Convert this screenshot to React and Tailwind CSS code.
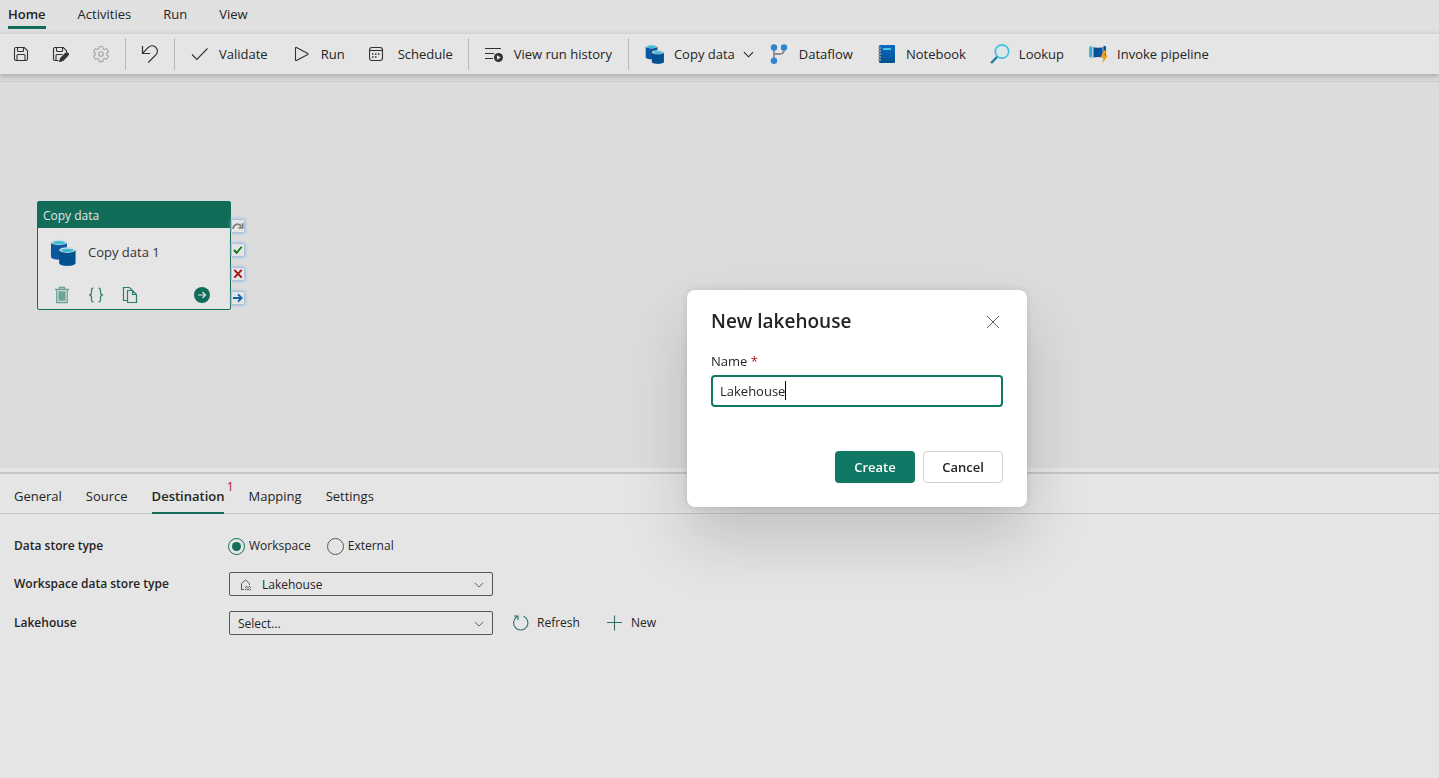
import React, { useState } from 'react';

const SaveIcon = () => (
  <svg width="16" height="16" viewBox="0 0 16 16" fill="none" stroke="#333" strokeWidth="1.1">
    <path d="M1.500 3A1.500 1.500 0 0 1 3 1.500h8.300l3.200 3.200V13a1.500 1.500 0 0 1-1.500 1.500H3A1.500 1.500 0 0 1 1.500 13z" />
    <path d="M4.500 1.500v3a1 1 0 0 0 1 1h4a1 1 0 0 0 1-1v-3M4 14.500V9.500a1 1 0 0 1 1-1h6a1 1 0 0 1 1 1v5" />
  </svg>
);

const SaveEditIcon = () => (
  <svg width="17" height="16" viewBox="0 0 17 16" fill="none" stroke="#333" strokeWidth="1.1">
    <path d="M6.500 14.500H3A1.500 1.500 0 0 1 1.500 13V3A1.500 1.500 0 0 1 3 1.500h8.300l3.200 3.200V6" />
    <path d="M4.500 1.500v3a1 1 0 0 0 1 1h4a1 1 0 0 0 1-1v-3M4 14.500V9.500a1 1 0 0 1 1-1h5.500" />
    <path d="M13.700 7.200a1.500 1.500 0 0 1 2.200 2.200l-5 5-3.200 1.100.9-3.200z" fill="#333" />
  </svg>
);

const GearIcon = () => (
  <svg width="18" height="18" viewBox="0 0 24 24" fill="none" stroke="#a6a6a6" strokeWidth="1.5" strokeLinejoin="round">
    <path d="M9.700 2h4.600l.6 3 1.800 1.050 2.900-1 2.300 4-2.300 2v2l2.300 2-2.300 4-2.900-1-1.800 1.050-.6 3H9.700l-.6-3-1.800-1.050-2.900 1-2.300-4 2.300-2v-2l-2.300-2 2.300-4 2.900 1L9.100 5z" />
    <circle cx="12" cy="12" r="3" />
  </svg>
);

const UndoIcon = () => (
  <svg width="18" height="20" viewBox="0 0 18 20" fill="none" stroke="#333" strokeWidth="1.2">
    <path d="M1.500 2v7.500H9M1.800 9.200l5-5.400c2.200-2.300 5.400-2.500 7.600-.8 2.600 2.100 2.700 5.500.4 7.900L7.300 18.500" />
  </svg>
);

const CheckIcon = () => (
  <svg width="18" height="14" viewBox="0 0 18 14" fill="none" stroke="#333" strokeWidth="1.1">
    <path d="M1 7.500 5.800 12.500 16.500 1.500" />
  </svg>
);

const PlayIcon = () => (
  <svg width="16" height="16" viewBox="0 0 16 16" fill="none" stroke="#333" strokeWidth="1.1" strokeLinejoin="round">
    <path d="M1.500 2v12c0 .5.400.700.900.500l11.400-6c.5-.3.500-.8 0-1L2.400 1.500c-.5-.2-.9 0-.9.500z" />
  </svg>
);

const CalendarIcon = () => (
  <svg width="20" height="16" viewBox="1 0 20 16" fill="none" stroke="#333" strokeWidth="1.1">
    <rect x="1.500" y="1.500" width="13" height="13" rx="2.500" />
    <path d="M1.500 4.500h13" />
    <path d="M7 8h1.500M10 8h1.500M4 8h1.500M4 11h1.500M7 11h1.500" strokeWidth="1.5" />
  </svg>
);

const HistoryIcon = () => (
  <svg width="20" height="18" viewBox="0 0 20 18" fill="none" stroke="#333" strokeWidth="1.2">
    <path d="M0 3.500h16M0 8.500h9M0 13.500h8" />
    <circle cx="13.500" cy="12.500" r="4.500" fill="#333" stroke="none" />
    <path d="M12 10.200v4.600l3.800-2.300z" fill="#e5e5e5" stroke="none" />
  </svg>
);

const CopyDataIcon = ({ size = 20 }) => (
  <svg width={size} height={size} viewBox="0 0 28 28">
    <path d="M1 3.500v15c0 1.800 4 3 8.500 3s8-1.200 8-3v-15z" fill="#0a58a0" />
    <ellipse cx="9.250" cy="3.500" rx="8.250" ry="2.700" fill="#cdd9e0" />
    <ellipse cx="9.250" cy="3.800" rx="6.300" ry="1.700" fill="#35bcd6" />
    <path d="M9.500 11.500V25c0 1.800 3.800 3 8.500 3s8.500-1.200 8.500-3V11.500z" fill="#03508f" />
    <ellipse cx="18" cy="11.500" rx="8.500" ry="2.900" fill="#cdd9e0" />
    <ellipse cx="18" cy="11.800" rx="6.500" ry="1.800" fill="#35bcd6" />
  </svg>
);

const DataflowIcon = () => (
  <svg width="20" height="22" viewBox="1 0 20 22" fill="none">
    <path d="M5 4v14M5 11h5.500c3 0 4.500-1.500 4.500-4V4" stroke="#8b8b8b" strokeWidth="1.8" />
    <circle cx="5" cy="4.500" r="3.200" fill="#2f86d0" />
    <circle cx="15" cy="4.500" r="3.200" fill="#2f86d0" />
    <circle cx="5" cy="17.800" r="3.200" fill="#2f86d0" />
  </svg>
);

const NotebookIcon = () => (
  <svg width="20" height="20" viewBox="1 0 20 20">
    <defs>
      <linearGradient id="notebook" x1="0" y1="0" x2="0" y2="1">
        <stop offset="0" stopColor="#0a6cc4" />
        <stop offset="1" stopColor="#05508f" />
      </linearGradient>
    </defs>
    <rect x="3" y="1" width="16" height="18" rx="1" fill="url(#notebook)" />
    <rect x="7" y="4" width="8" height="2" fill="#46c3e0" />
    <path d="M2 4h3M2 7h3M2 10h3M2 13h3M2 16h3" stroke="#a3a3a3" strokeWidth="1.5" />
  </svg>
);

const LookupIcon = () => (
  <svg width="20" height="22" viewBox="0 0 20 22" fill="none">
    <path d="M7.500 13.500 1.800 19.300" stroke="#1f7fa3" strokeWidth="2.4" strokeLinecap="round" />
    <circle cx="12" cy="8.500" r="6.700" stroke="#3fc2dc" strokeWidth="1.7" fill="#dde7ea" />
  </svg>
);

const InvokeIcon = () => (
  <svg width="20" height="20" viewBox="0 0 20 20">
    <path d="M4 3c4 1 8.500 1 12.500 0v10.500c-4-.8-8.500-.8-12.500 0z" fill="#06529a" />
    <rect x="14.500" y="1.500" width="3.500" height="13" rx="1.700" fill="#a9c7d6" />
    <rect x="15.500" y="2" width="2.500" height="12" rx="1.200" fill="#0a4f8c" />
    <rect x="1" y="1.500" width="4.500" height="13" rx="2.200" fill="#c3d3db" />
    <rect x="1.300" y="2.500" width="2.800" height="11" rx="1.400" fill="#2fb0d0" />
    <path d="M16 6.500 12.200 13.500h3.400l-1.400 6L20 11.500h-3.200l2-5z" fill="#f0a010" />
  </svg>
);

const ChevronIcon = ({ size = 12 }) => (
  <svg width={size} height={size} viewBox="0 0 12 12" fill="none" stroke="currentColor" strokeWidth="1.2">
    <path d="M1 3.500l5 5 5-5" />
  </svg>
);

const TrashIcon = () => (
  <svg width="16" height="18" viewBox="0 0 16 18" fill="none" stroke="#6ca598" strokeWidth="1.3">
    <path d="M1 3.500h14M5.500 3V1.500h5V3M2.700 3.500v13h10.600v-13" />
    <path d="M5 6h6v8H5z" fill="#6ca598" />
  </svg>
);

const BracesIcon = () => (
  <svg width="16" height="16" viewBox="0 0 16 16" fill="none" stroke="#2c7d6c" strokeWidth="1.2">
    <path d="M5.500 1C3.500 1 3.500 2 3.500 3.500v2C3.500 7 3 8 1 8c2 0 2.500 1 2.500 2.500v2c0 1.500 0 2.500 2 2.500M10.500 1c2 0 2 1 2 2.500v2C12.500 7 13 8 15 8c-2 0-2.500 1-2.500 2.500v2c0 1.500 0 2.500-2 2.500" />
  </svg>
);

const PagesIcon = () => (
  <svg width="16" height="18" viewBox="0 0 16 18" fill="none" stroke="#2c7d6c" strokeWidth="1.2">
    <path d="M5 14.500H1.500v-13h6l3 3M5.500 4.500h5l4 4v8h-9zM10.500 4.500v4h4" />
  </svg>
);

const GoIcon = () => (
  <svg width="16" height="16" viewBox="0 0 16 16" fill="none">
    <circle cx="8" cy="8" r="8" fill="#116d59" />
    <path d="M4 8h7.500M8.500 5l3 3-3 3" stroke="#e5e5e5" strokeWidth="1.2" />
  </svg>
);

const LakehouseIcon = () => (
  <svg width="12" height="12" viewBox="0 0 12 12" fill="none" stroke="#555" strokeWidth="1">
    <path d="M4 10.500H1.500V4.500L5.500 1l4 3.500V6M5 8.500l1.500-1 1.500 1 1.500-1 1.500 1M5 11l1.500-1L8 11l1.500-1 1.500 1" />
  </svg>
);

const RefreshIcon = () => (
  <svg width="18" height="18" viewBox="0 0 18 18" fill="none" stroke="#2f6f68" strokeWidth="1.1">
    <path d="M11.500 2.200a7.200 7.200 0 1 1-6.300.4M2 2h4v4" />
  </svg>
);

const PlusIcon = () => (
  <svg width="16" height="16" viewBox="0 0 16 16" fill="none" stroke="#2f6f68" strokeWidth="1.1">
    <path d="M7.500 .500v15M0 7.500h15" />
  </svg>
);

const CloseIcon = () => (
  <svg width="14" height="14" viewBox="0 0 14 14" fill="none" stroke="#616161" strokeWidth="1">
    <path d="M1 1l12 12M13 1 1 13" />
  </svg>
);

const ports = [
  { label: 'On skip', path: 'M1 9.500c1-5.500 6.500-6.500 9-2.500M11.500 3.500v5H7', color: '#808080' },
  { label: 'On success', path: 'M2 6.500 5 9.500 10.500 3', color: '#0f7a12' },
  { label: 'On fail', path: 'M2.500 2l8 8.500M10.500 2l-8 8.500', color: '#a80f0f' },
  { label: 'On completion', path: 'M1 6.500h9.500M6.500 2.500l4 4-4 4', color: '#1460b0' },
];

const ToolButton = ({ icon, children }) => (
  <button type="button" className="flex h-8 items-center gap-[9px] px-3 whitespace-nowrap">
    <span className="flex w-5 shrink-0 justify-center">{icon}</span>
    {children}
  </button>
);

const Separator = () => <div className="h-8 w-px shrink-0 bg-[#b8b8b8]" />;

const TopTabs = () => (
  <nav className="flex h-[33px] gap-8 bg-[#e0e0e0] px-2">
    {['Home', 'Activities', 'Run', 'View'].map((tab) => (
      <a
        key={tab}
        href="#"
        className={
          tab === 'Home'
            ? 'h-[29px] border-b-3 border-[#116d59] pt-1 font-semibold'
            : 'h-[29px] pt-1'
        }
      >
        {tab}
      </a>
    ))}
  </nav>
);

const Toolbar = () => (
  <div className="relative z-10 flex h-[41px] items-center border-t border-[#d2d2d2] bg-[#e5e5e5] shadow-[0_2px_5px_rgba(0,0,0,0.22)]">
    <div className="flex w-[125px] shrink-0 items-center gap-[23px] pl-[13px]">
      <button type="button" aria-label="Save"><SaveIcon /></button>
      <button type="button" aria-label="Save as"><SaveEditIcon /></button>
      <button type="button" aria-label="Settings" disabled><GearIcon /></button>
    </div>
    <Separator />
    <button type="button" aria-label="Undo" className="flex w-12 shrink-0 justify-center"><UndoIcon /></button>
    <Separator />
    <div className="flex px-[3px]">
      <ToolButton icon={<CheckIcon />}>Validate</ToolButton>
      <ToolButton icon={<PlayIcon />}>Run</ToolButton>
      <ToolButton icon={<CalendarIcon />}>Schedule</ToolButton>
    </div>
    <Separator />
    <div className="flex px-1">
      <ToolButton icon={<HistoryIcon />}>View run history</ToolButton>
    </div>
    <Separator />
    <div className="flex pl-1">
      <button type="button" className="flex h-8 items-center gap-[9px] pr-1 pl-3 whitespace-nowrap">
        <CopyDataIcon />
        <span className="flex items-center gap-2">Copy data <ChevronIcon size={11} /></span>
      </button>
      <ToolButton icon={<DataflowIcon />}>Dataflow</ToolButton>
      <ToolButton icon={<NotebookIcon />}>Notebook</ToolButton>
      <ToolButton icon={<LookupIcon />}>Lookup</ToolButton>
      <ToolButton icon={<InvokeIcon />}>Invoke pipeline</ToolButton>
    </div>
  </div>
);

const ActivityNode = () => (
  <div className="absolute top-[119px] left-[37px] w-[194px]">
    <div className="rounded-xs border border-[#116d59] bg-[#e5e5e5]">
      <div className="h-[26px] bg-[#116d59] pl-[5px] text-xs leading-[27px] text-[#e5e5e5]">Copy data</div>
      <div className="flex h-[49px] items-center gap-[11px] pl-3 text-[#333]">
        <CopyDataIcon size={27} />
        <span className="pb-0.5">Copy data 1</span>
      </div>
      <div className="flex h-8 items-center gap-[18px] pt-1 pl-4">
        <button type="button" aria-label="Delete"><TrashIcon /></button>
        <button type="button" aria-label="Code"><BracesIcon /></button>
        <button type="button" aria-label="Clone"><PagesIcon /></button>
        <button type="button" aria-label="Open" className="mr-5 ml-auto"><GoIcon /></button>
      </div>
    </div>
    <div className="absolute top-[19px] left-[195px] flex flex-col gap-3">
      {ports.map((port) => (
        <button
          key={port.label}
          type="button"
          aria-label={port.label}
          className="flex size-3 items-center justify-center bg-[#e5e5e5] shadow-[0_0_3px_1px_#8db4dc]"
        >
          <svg width="12" height="12" viewBox="0 0 13 13" fill="none" stroke={port.color} strokeWidth="2">
            <path d={port.path} />
          </svg>
        </button>
      ))}
    </div>
  </div>
);

const DetailTabs = () => (
  <nav className="flex h-10 gap-6 border-b border-[#c6c6c6] px-3.5">
    {['General', 'Source', 'Destination', 'Mapping', 'Settings'].map((tab) => (
      <a
        key={tab}
        href="#"
        className={
          tab === 'Destination'
            ? 'relative h-10 border-b-2 border-[#116d59] pt-3 font-semibold'
            : 'h-10 pt-3'
        }
      >
        {tab}
        {tab === 'Destination' && (
          <span className="absolute top-0.5 left-full pl-0.5 font-normal text-[#b5233f]">1</span>
        )}
      </a>
    ))}
  </nav>
);

const radioClass =
  'size-[17px] appearance-none rounded-full border border-[#555] checked:border-[#116d59] checked:bg-[#116d59] checked:bg-clip-content checked:p-[3px]';

const DestinationForm = () => {
  const [storeType, setStoreType] = useState('workspace');

  return (
    <form className="flex flex-col gap-3.5 px-3.5 pt-5 text-xs">
      <div className="flex h-6 items-center">
        <span className="w-[214px] font-semibold">Data store type</span>
        <div className="flex gap-4">
          <label className="flex items-center gap-1">
            <input
              type="radio"
              name="storeType"
              checked={storeType === 'workspace'}
              onChange={() => setStoreType('workspace')}
              className={radioClass}
            />
            Workspace
          </label>
          <label className="flex items-center gap-1">
            <input
              type="radio"
              name="storeType"
              checked={storeType === 'external'}
              onChange={() => setStoreType('external')}
              className={radioClass}
            />
            External
          </label>
        </div>
      </div>

      <div className="flex h-6 items-center">
        <label htmlFor="workspaceType" className="w-[215px] font-semibold">Workspace data store type</label>
        <div className="relative">
          <select
            id="workspaceType"
            className="block h-6 w-[264px] appearance-none rounded-xs border border-[#555] pt-0.5 pl-8"
          >
            <option>Lakehouse</option>
          </select>
          <span className="pointer-events-none absolute top-[7px] left-[11px]"><LakehouseIcon /></span>
          <span className="pointer-events-none absolute top-2 right-[9px] text-[#616161]"><ChevronIcon size={10} /></span>
        </div>
      </div>

      <div className="mt-px flex h-6 items-center">
        <label htmlFor="lakehouse" className="w-[215px] font-semibold">Lakehouse</label>
        <div className="relative">
          <select
            id="lakehouse"
            className="block h-6 w-[264px] appearance-none rounded-xs border border-[#555] pt-0.5 pl-2"
          >
            <option>Select...</option>
          </select>
          <span className="pointer-events-none absolute top-2 right-[9px] text-[#616161]"><ChevronIcon size={10} /></span>
        </div>
        <button type="button" className="ml-[19px] flex items-center gap-[7px]">
          <RefreshIcon />
          Refresh
        </button>
        <button type="button" className="ml-[27px] flex items-center gap-2">
          <PlusIcon />
          New
        </button>
      </div>
    </form>
  );
};

const NewLakehouseDialog = () => {
  const [name, setName] = useState('Lakehouse');

  return (
    <div className="fixed inset-0 z-20 flex items-center justify-center pt-[19px] pl-[275px]">
      <div
        role="dialog"
        aria-labelledby="dialogTitle"
        className="w-[340px] rounded-lg bg-white p-6 pt-4 text-[#242424] shadow-[0_0_8px_rgba(0,0,0,0.12),0_32px_64px_rgba(0,0,0,0.16)]"
      >
        <div className="flex h-8 items-center justify-between">
          <h2 id="dialogTitle" className="pb-0.5 text-[19px] font-semibold">New lakehouse</h2>
          <button type="button" aria-label="Close" className="pr-[3px]"><CloseIcon /></button>
        </div>
        <label htmlFor="name" className="mt-3.5 block leading-[18px]">
          Name <span className="text-[#b10e1c]">*</span>
        </label>
        <div className="relative mt-[5px]">
          <input
            id="name"
            type="text"
            value={name}
            onChange={(e) => setName(e.target.value)}
            className="block h-8 w-full rounded-sm border-2 border-[#117865] px-[7px] caret-transparent outline-none"
          />
          <span className="pointer-events-none absolute top-1.5 left-[74px] h-[19px] w-px bg-black" />
        </div>
        <div className="mt-11 flex justify-end gap-2 font-semibold">
          <button type="button" className="h-8 w-20 rounded-sm bg-[#117865] text-white">Create</button>
          <button type="button" className="h-8 w-20 rounded-sm border border-[#d1d1d1]">Cancel</button>
        </div>
      </div>
    </div>
  );
};

const App = () => (
  <div className="flex min-h-screen flex-col bg-[#e5e5e5] font-['Open_Sans',sans-serif] text-[13px] leading-5 text-[#242424]">
    <TopTabs />
    <Toolbar />
    <div className="h-[7px] bg-[#d8d8d8]" />
    <main className="relative h-[387px] border-t border-[#cacaca] bg-[#dcdcdc]">
      <ActivityNode />
    </main>
    <section className="mt-1 border-t-2 border-[#c6c6c6]">
      <DetailTabs />
      <DestinationForm />
    </section>
    <NewLakehouseDialog />
  </div>
);

export default App;
